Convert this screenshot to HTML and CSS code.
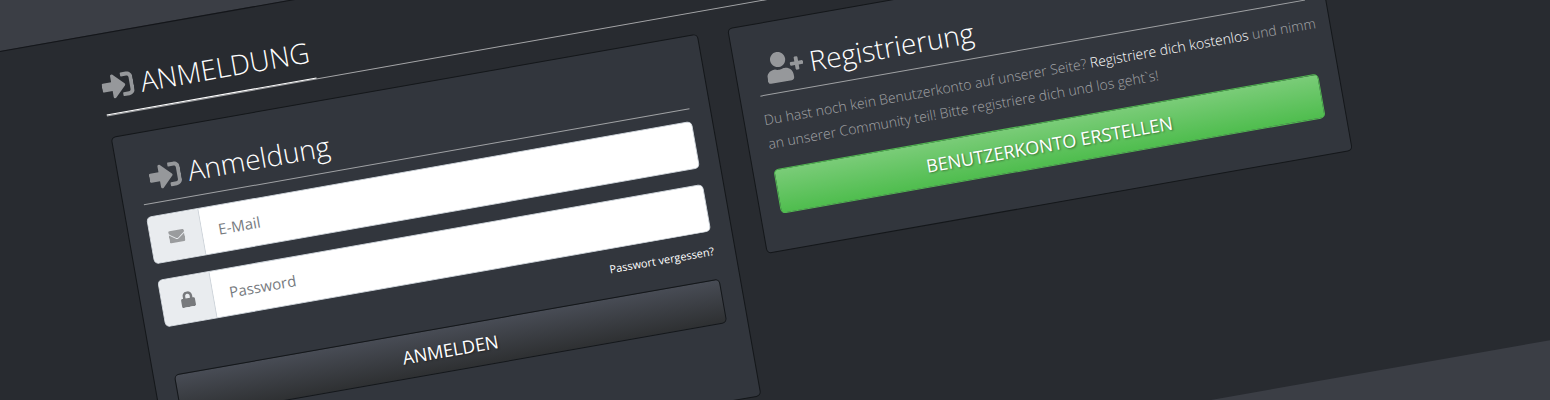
FILE: index.html
```html
<!DOCTYPE html>
<html lang="de">
<head>
<meta charset="utf-8">
<title>Anmeldung</title>
<link rel="stylesheet" href="styles.css">
</head>
<body>
<svg class="sprite" aria-hidden="true">
  <symbol id="sign-in" viewBox="0 0 512 512"><path d="M416 448h-84c-6.600 0-12-5.400-12-12v-40c0-6.600 5.400-12 12-12h84c17.700 0 32-14.300 32-32V160c0-17.700-14.300-32-32-32h-84c-6.600 0-12-5.400-12-12V76c0-6.600 5.400-12 12-12h84c53 0 96 43 96 96v192c0 53-43 96-96 96zm-47-201L201 79c-15-15-41-4.500-41 17v96H24c-13.300 0-24 10.700-24 24v96c0 13.300 10.700 24 24 24h136v96c0 21.500 26 32 41 17l168-168c9.300-9.400 9.300-24.600 0-34z"/></symbol>
  <symbol id="user-plus" viewBox="0 0 640 512"><path d="M624 208h-64v-64c0-8.800-7.200-16-16-16h-32c-8.800 0-16 7.200-16 16v64h-64c-8.800 0-16 7.200-16 16v32c0 8.800 7.200 16 16 16h64v64c0 8.800 7.200 16 16 16h32c8.800 0 16-7.200 16-16v-64h64c8.800 0 16-7.200 16-16v-32c0-8.800-7.200-16-16-16zm-400 48c70.700 0 128-57.300 128-128S294.700 0 224 0 96 57.300 96 128s57.300 128 128 128zm89.600 32h-16.700c-22.200 10.200-46.900 16-72.900 16s-50.600-5.800-72.900-16h-16.700C60.200 288 0 348.200 0 422.400V464c0 26.500 21.500 48 48 48h352c26.500 0 48-21.500 48-48v-41.600c0-74.200-60.200-134.400-134.400-134.400z"/></symbol>
  <symbol id="envelope" viewBox="0 0 512 512"><path d="M502.300 190.800c3.900-3.100 9.700-.2 9.700 4.700V400c0 26.500-21.500 48-48 48H48c-26.500 0-48-21.500-48-48V195.600c0-5 5.700-7.800 9.700-4.700 22.400 17.400 52.100 39.500 154.100 113.600 21.100 15.400 56.700 47.800 92.200 47.600 35.700.3 72-32.800 92.300-47.600 102-74.100 131.600-96.300 154-113.700zM256 320c23.200.4 56.600-29.200 73.400-41.400 132.700-96.300 142.800-104.700 173.400-128.700 5.800-4.500 9.200-11.500 9.200-18.900v-19c0-26.500-21.500-48-48-48H48c-26.500 0-48 21.500-48 48v19c0 7.400 3.400 14.300 9.200 18.900 30.600 23.900 40.700 32.400 173.400 128.700 16.800 12.200 50.200 41.800 73.400 41.400z"/></symbol>
  <symbol id="lock" viewBox="0 0 448 512"><path d="M400 224h-24v-72C376 68.200 307.800 0 224 0S72 68.200 72 152v72H48c-26.500 0-48 21.500-48 48v192c0 26.500 21.500 48 48 48h352c26.500 0 48-21.500 48-48V272c0-26.500-21.500-48-48-48zm-104 0H152v-72c0-39.700 32.300-72 72-72s72 32.300 72 72v72z"/></symbol>
</svg>
<main class="band">
  <header class="page-head">
    <h1 class="page-title"><svg class="icon" aria-hidden="true"><use href="#sign-in"/></svg><span>ANMELDUNG</span></h1>
  </header>
  <div class="cards">
    <section class="card">
      <h2 class="card-title"><svg class="icon" aria-hidden="true"><use href="#sign-in"/></svg><span>Anmeldung</span></h2>
      <form class="login">
        <div class="field">
          <label class="addon" for="email"><svg class="icon-small" role="img" aria-label="E-Mail"><use href="#envelope"/></svg></label>
          <input class="input" id="email" type="email" placeholder="E-Mail">
        </div>
        <div class="field">
          <label class="addon addon-lock" for="password"><svg class="icon-small" role="img" aria-label="Password"><use href="#lock"/></svg></label>
          <input class="input" id="password" type="password" placeholder="Password">
        </div>
        <a class="forgot" href="#">Passwort vergessen?</a>
        <button class="button" type="submit">ANMELDEN</button>
      </form>
    </section>
    <section class="card">
      <h2 class="card-title"><svg class="icon icon-wide" aria-hidden="true"><use href="#user-plus"/></svg><span>Registrierung</span></h2>
      <p class="intro">Du hast noch kein Benutzerkonto auf unserer Seite? <a class="link" href="#">Registriere dich kostenlos</a> und nimm an unserer Community teil! Bitte registriere dich und los geht`s!</p>
      <button class="button button-green" type="button">BENUTZERKONTO ERSTELLEN</button>
    </section>
  </div>
</main>
</body>
</html>
```
FILE: styles.css
```css
*, *::before, *::after {
  box-sizing: border-box;
}

html {
  height: 100%;
  overflow: hidden;
}

body {
  height: 100%;
  margin: 0;
  padding-top: 51px;
  overflow: hidden;
  background: #3b3e45;
  color: #fff;
  font-family: "Open Sans", "Noto Sans", sans-serif;
  font-size: 15px;
  line-height: 24px;
}

.sprite {
  display: none;
}

/* The band runs past both window edges so that the tilt leaves no gap. */
.band {
  margin: 0 -200px;
  padding: 31px 435px 82px 294px;
  border-top: 1px solid #14161a;
  background: #282b30;
  transform: rotate(-10deg);
  transform-origin: 200px 0;
}

.page-head {
  margin-bottom: 21px;
  border-bottom: 1px solid #a5a6a8;
}

.page-title,
.card-title {
  display: flex;
  align-items: center;
  gap: 7px;
  margin: 0;
  font-size: 28px;
  font-weight: 300;
}

.page-title {
  width: max-content;
  padding: 0 3px 5px 0;
  border-bottom: 1px solid #fff;
  line-height: 44px;
}

.card-title {
  margin-bottom: 12px;
  padding-left: 10px;
  border-bottom: 1px solid #a0a2a5;
  line-height: 51px;
}

.icon {
  width: 32px;
  height: 32px;
  fill: #96989b;
}

.icon-wide {
  width: 38px;
}

.cards {
  display: grid;
  grid-template-columns: 1fr 1fr;
  align-items: start;
  gap: 30px;
}

.card {
  padding: 20px 20px 36px;
  border: 1px solid #14171a;
  border-radius: 5px;
  background: #32363d;
}

.login {
  display: flex;
  flex-direction: column;
  margin-bottom: 41px;
}

.field {
  display: flex;
  height: 48px;
  margin-bottom: 16px;
  overflow: hidden;
  border: 1px solid #ced4da;
  border-radius: 5px;
  background: #fff;
}

.addon {
  display: flex;
  flex: 0 0 52px;
  align-items: center;
  justify-content: center;
  border-right: 1px solid #ced4da;
  background: #e9ecef;
}

.icon-small {
  width: 16px;
  height: 16px;
  fill: #9a9c9e;
}

.addon-lock .icon-small {
  fill: #77797c;
}

.input {
  flex: 1;
  min-width: 0;
  padding: 0 16px;
  border: 0;
  background: #fff;
  color: #495057;
  font: inherit;
}

.input::placeholder {
  color: #777b80;
  opacity: 1;
}

.forgot {
  align-self: flex-end;
  margin: -6px 0 18px;
  color: #fff;
  font-size: 11px;
  line-height: 20px;
  text-decoration: none;
}

.button {
  display: block;
  width: 100%;
  height: 45px;
  padding: 0;
  border: 1px solid #14171a;
  border-radius: 5px;
  background: linear-gradient(#484c55, #2e3032);
  color: #fff;
  font: inherit;
  font-size: 18px;
  text-shadow: 1px 1px 2px rgba(0, 0, 0, 0.4);
}

.button-green {
  border-color: #52b852;
  background: linear-gradient(#7acc78, #4fbd4e);
}

.intro {
  margin: 0 -10px 14px 0;
  color: #a2a4a7;
  font-size: 14px;
  font-weight: 300;
}

.link {
  color: #fff;
  text-decoration: none;
}
```
